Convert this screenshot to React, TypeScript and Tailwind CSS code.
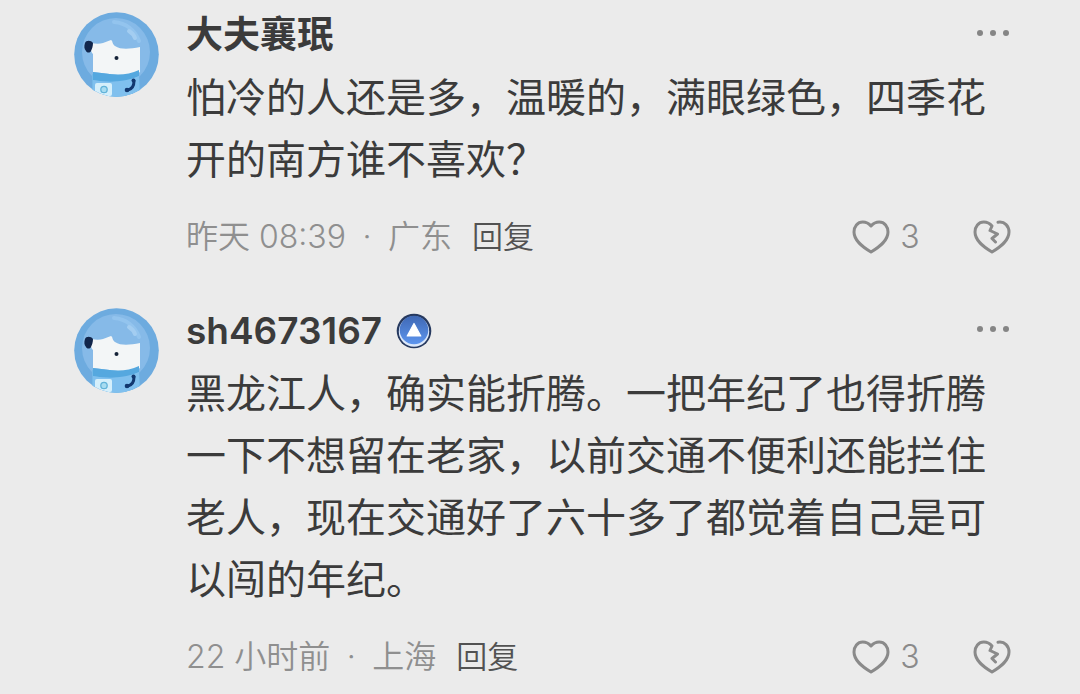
type Comment = {
  id: number;
  name: string;
  official?: boolean;
  text: string;
  time: string;
  place: string;
  likes: number;
};

const COMMENTS: Comment[] = [
  {
    id: 1,
    name: "大夫襄珉",
    text: "怕冷的人还是多，温暖的，满眼绿色，四季花开的南方谁不喜欢？",
    time: "昨天 08:39",
    place: "广东",
    likes: 3,
  },
  {
    id: 2,
    name: "sh4673167",
    official: true,
    text: "黑龙江人，确实能折腾。一把年纪了也得折腾一下不想留在老家，以前交通不便利还能拦住老人，现在交通好了六十多了都觉着自己是可以闯的年纪。",
    time: "22 小时前",
    place: "上海",
    likes: 3,
  },
];

function Avatar({ id }: { id: number }) {
  const clip = `avatar-${id}`;
  return (
    <svg viewBox="0 0 85 85" className="size-[85px] shrink-0" aria-hidden="true">
      <defs>
        <clipPath id={clip}>
          <circle cx="42.5" cy="42.5" r="42.3" />
        </clipPath>
      </defs>
      <g clipPath={`url(#${clip})`}>
        <rect width="85" height="85" fill="#6dabdf" />
        <circle cx="42" cy="40" r="34" fill="#86bae8" />
        <path d="M40 10c12 1 21 8 25 19" fill="none" stroke="#93c4ee" strokeWidth="4" strokeLinecap="round" />
        <path d="M55 19c3 2 5 4 6 7" fill="none" stroke="#a3cdf1" strokeWidth="4" strokeLinecap="round" />
        <path d="M18 62h47l2 25H18z" fill="#74b9e8" />
        <path d="M17 31c5 1 9 1 12 0l8-3c2 1 1 4 4 6 6 4 15 3 25 1v25c-6 4-14 4-22 3l-25-3V42c-2-2-3-6-2-11z" fill="#f3f6f7" />
        <path d="M19 60c16 2 32 5 46-2v6c-13 7-30 7-46 4z" fill="#55a8df" />
        <path d="M19 68c16 3 33 2 46-4v22H19z" fill="#80c0ee" />
        <path d="M11 31c1-3 6-3 8 0 0 3-1 6-2 8-1 2-4 2-5 0-2-2-2-5-1-8z" fill="#12264b" />
        <circle cx="42.500" cy="46" r="2" fill="#142238" />
        <rect x="21" y="71" width="17" height="13" rx="2" fill="#d5effb" />
        <circle cx="30" cy="77.500" r="3.200" fill="#a7dcf1" stroke="#62b3d9" strokeWidth="1.3" />
        <path d="M60 69c0 5-2 8-6 9" fill="none" stroke="#12386f" strokeWidth="3" strokeLinecap="round" />
        <circle cx="59.500" cy="68.500" r="2" fill="#12386f" />
        <circle cx="53" cy="78" r="2.300" fill="#12386f" />
      </g>
    </svg>
  );
}

function Badge() {
  return (
    <svg viewBox="0 0 36 36" className="size-9" aria-hidden="true">
      <defs>
        <linearGradient id="badge" x1="0" y1="0" x2="0" y2="1">
          <stop offset="0" stopColor="#3f68b4" />
          <stop offset="1" stopColor="#5d95ee" />
        </linearGradient>
      </defs>
      <circle cx="18" cy="18" r="17.3" fill="#26395f" />
      <circle cx="18" cy="18.500" r="15.200" fill="#dce8fa" />
      <circle cx="18" cy="17" r="14.300" fill="url(#badge)" />
      <path d="M18 10.500 24.800 23H11.200z" fill="#fff" stroke="#fff" strokeWidth="1.2" strokeLinejoin="round" />
    </svg>
  );
}

function HeartIcon() {
  return (
    <svg viewBox="0 0 38 34" className="h-[34px] w-[38px]" fill="none" stroke="currentColor" strokeWidth="3" strokeLinejoin="round" aria-hidden="true">
      <path d="M19 6C16.500 3 13.500 2 10.800 2 5.500 2 2 6.500 2 12c0 8.500 8 14.500 17 20 9-5.500 17-11.500 17-20 0-5.500-3.500-10-8.800-10C24.500 2 21.500 3 19 6z" />
    </svg>
  );
}

function BrokenHeartIcon() {
  return (
    <svg viewBox="0 0 38 34" className="h-[34px] w-[38px]" fill="none" stroke="currentColor" strokeWidth="3" strokeLinecap="round" strokeLinejoin="round" aria-hidden="true">
      <path d="M25 2.200C32 1 36 6.500 36 12c0 8.500-8 14.500-17 20C10 26.500 2 20.500 2 12 2 6.500 5.500 2 10.800 2c3.200 0 6 1.300 8.200 4l-2 4.500 7.500 3.500-5.500 4.500 3.500 3.500" />
    </svg>
  );
}

function CommentItem({ comment }: { comment: Comment }) {
  return (
    <article className="flex items-start gap-[27px]">
      <Avatar id={comment.id} />
      <div className="min-w-0 flex-1">
        <header className="flex h-[46px] items-center gap-[14px]">
          <h2 className="text-[37px] leading-[46px] font-semibold text-[#3b3b3b]">{comment.name}</h2>
          {comment.official && <Badge />}
          <button type="button" aria-label="更多" className="mr-[2px] mb-1 ml-auto flex h-8 items-center gap-[7px] text-[#858585]">
            <span className="size-[6px] rounded-full bg-current" />
            <span className="size-[6px] rounded-full bg-current" />
            <span className="size-[6px] rounded-full bg-current" />
          </button>
        </header>
        <p className="mt-[9px] text-[40px] leading-[62px] text-[#3b3b3b]">{comment.text}</p>
        <footer className="mt-[22px] flex h-12 items-center text-[32px] leading-[48px] font-[350] text-[#8f8f8f]">
          <span>{comment.time}</span>
          <span className="w-[42px] text-center">·</span>
          <span>{comment.place}</span>
          <button type="button" className="ml-5 text-[31px] text-[#525252]">
            回复
          </button>
          <button type="button" aria-label={`赞 ${comment.likes}`} className="ml-auto flex items-center gap-[10px] text-[#8a8a8a]">
            <HeartIcon />
            <span className="w-5">{comment.likes}</span>
          </button>
          <button type="button" aria-label="踩" className="ml-[53px] text-[#8a8a8a]">
            <BrokenHeartIcon />
          </button>
        </footer>
      </div>
    </article>
  );
}

export default function App() {
  return (
    <main
      lang="zh-CN"
      className="flex min-h-screen flex-col gap-[47px] bg-[#ebebeb] pt-3 pr-[69px] pl-[74px] font-[Inter,'Noto_Sans_CJK_SC',sans-serif]"
    >
      {COMMENTS.map((comment) => (
        <CommentItem key={comment.id} comment={comment} />
      ))}
    </main>
  );
}
